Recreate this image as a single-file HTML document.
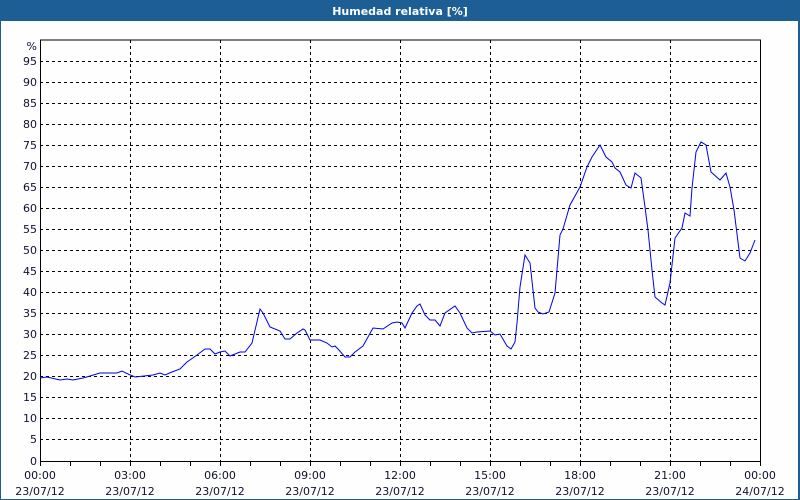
<!DOCTYPE html>
<html><head><meta charset="utf-8"><style>
html,body{margin:0;padding:0;background:#fff;}
svg{display:block;}
text{font-family:"DejaVu Sans","Liberation Sans",sans-serif;font-size:11px;fill:#101030;}
</style></head><body>
<svg width="800" height="500" viewBox="0 0 800 500" xmlns="http://www.w3.org/2000/svg">
<rect x="0" y="0" width="800" height="500" fill="#fdfefd"/>
<rect x="0" y="0" width="800" height="21" fill="#1d5f95"/>
<rect x="0" y="0" width="1" height="500" fill="#1d5f95"/>
<rect x="798" y="0" width="2" height="500" fill="#1d5f95"/>
<rect x="0" y="499" width="800" height="1" fill="#1d5f95"/>
<text x="400" y="15" text-anchor="middle" style="fill:#fff;font-weight:bold;font-size:11px">Humedad relativa [%]</text>
<g stroke="#000" stroke-width="1" stroke-dasharray="3,3" fill="none" shape-rendering="crispEdges">
<path d="M40 61.5H760M40 82.5H760M40 103.5H760M40 124.5H760M40 145.5H760M40 166.5H760M40 187.5H760M40 208.5H760M40 229.5H760M40 250.5H760M40 271.5H760M40 292.5H760M40 313.5H760M40 334.5H760M40 355.5H760M40 376.5H760M40 397.5H760M40 418.5H760M40 439.5H760"/>
<path d="M130.5 40V461M220.5 40V461M310.5 40V461M400.5 40V461M490.5 40V461M580.5 40V461M670.5 40V461"/>
</g>
<g stroke="#000" stroke-width="1" fill="none" shape-rendering="crispEdges">
<path d="M40.5 40V461.5H760.5V40H40"/>
<path d="M70.5 461V466M100.5 461V466M130.5 461V466M160.5 461V466M190.5 461V466M220.5 461V466M250.5 461V466M280.5 461V466M310.5 461V466M340.5 461V466M370.5 461V466M400.5 461V466M430.5 461V466M460.5 461V466M490.5 461V466M520.5 461V466M550.5 461V466M580.5 461V466M610.5 461V466M640.5 461V466M670.5 461V466M700.5 461V466M730.5 461V466M40.5 461V466M760.5 461V466"/>
</g>
<polyline fill="none" stroke="#0000ee" stroke-width="1" points="40,378 47,377 60,380 67,379 73,380 83,378 90,376 100,373 117,373 122,371 128,374 135,377 153,375 160,373 165,375 172,372 180,369 187,362 197,355 205,349 210,349 215,354 220,352 225,351 230,356 240,352 245,352 252,343 260,309 263,313 270,327 280,331 285,339 290,339 297,333 303,329 305,330 310,340 320,340 327,343 332,347 335,346 338,349 345,357 350,357 355,352 363,346 373,328 383,329 392,323 397,322 402,323 405,328 412,313 417,306 420,304 425,315 430,320 435,320 440,326 445,313 455,306 460,313 467,328 472,333 477,332 490,331 495,335 500,334 507,346 511,349 515,342 517,323 520,287 525,255 530,263 535,308 538,312 543,314 549,312 555,293 560,235 563,229 570,205 580,187 587,167 592,157 600,145 606,157 612,162 615,168 620,172 626,185 631,188 635,173 641,178 645,207 648,230 652,270 655,297 662,303 665,305 670,283 675,238 682,228 685,213 690,216 692,188 696,152 701,142 706,145 711,172 720,180 726,173 730,187 734,210 740,258 745,261 750,253 755,240"/>
<g text-anchor="end">
<text x="37" y="50">%</text>
<text x="37" y="65">95</text><text x="37" y="86">90</text><text x="37" y="107">85</text><text x="37" y="128">80</text><text x="37" y="149">75</text><text x="37" y="170">70</text><text x="37" y="191">65</text><text x="37" y="212">60</text><text x="37" y="233">55</text><text x="37" y="254">50</text><text x="37" y="275">45</text><text x="37" y="296">40</text><text x="37" y="317">35</text><text x="37" y="338">30</text><text x="37" y="359">25</text><text x="37" y="380">20</text><text x="37" y="401">15</text><text x="37" y="422">10</text><text x="37" y="443">5</text><text x="37" y="465">0</text>
</g>
<g text-anchor="middle">
<text x="40" y="479">00:00</text><text x="40" y="495">23/07/12</text>
<text x="130" y="479">03:00</text><text x="130" y="495">23/07/12</text>
<text x="220" y="479">06:00</text><text x="220" y="495">23/07/12</text>
<text x="310" y="479">09:00</text><text x="310" y="495">23/07/12</text>
<text x="400" y="479">12:00</text><text x="400" y="495">23/07/12</text>
<text x="490" y="479">15:00</text><text x="490" y="495">23/07/12</text>
<text x="580" y="479">18:00</text><text x="580" y="495">23/07/12</text>
<text x="670" y="479">21:00</text><text x="670" y="495">23/07/12</text>
<text x="760" y="479">00:00</text><text x="760" y="495">24/07/12</text>
</g>
</svg>
</body></html>
